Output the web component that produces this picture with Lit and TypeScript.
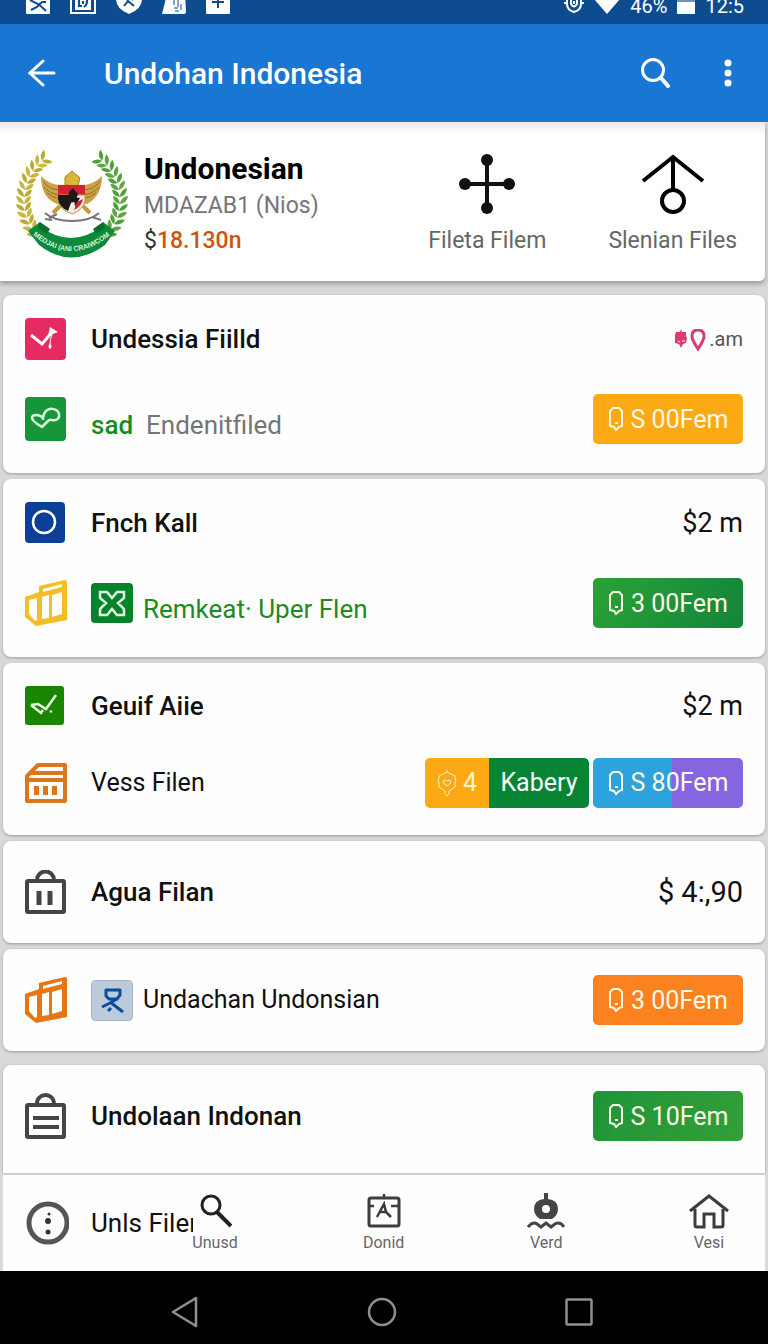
import { LitElement, html, svg, css, nothing } from 'lit';
import { customElement, property } from 'lit/decorators.js';

const icons: Record<string, { w: number; h: number; art: unknown }> = {
  gallery: {
    w: 24,
    h: 24,
    art: svg`<rect width="24" height="24" rx="1" fill="#fff"/>
      <path d="M4 10l8 4q4 3 8 7M5 20l6-3 5-5 4 0" fill="none" stroke="#0d4c8f" stroke-width="2"/>`,
  },
  frame: {
    w: 26,
    h: 24,
    art: svg`<rect x="1" y="1" width="24" height="22" fill="none" stroke="#fff" stroke-width="2"/>
      <rect x="5" y="4" width="16" height="16" fill="#fff"/>
      <path d="M9 8v8h3M13 11v3M17 8q1 6-3 9" fill="none" stroke="#0d4c8f" stroke-width="2"/>`,
  },
  shield: {
    w: 26,
    h: 25,
    art: svg`<path d="M0 2h26v8q0 10-13 15Q0 20 0 10z" fill="#fff"/>
      <path d="M8 17l4-5-2-4M12 12l6 5M13 8l4 3" fill="none" stroke="#0d4c8f" stroke-width="2"/>`,
  },
  archive: {
    w: 24,
    h: 24,
    art: svg`<path d="M5 4h18l1 18q0 2-2 2H0z" fill="#fff"/>
      <path d="M12 9v6M12 18h4M16 9v8M19 14v6M13 21h4" fill="none" stroke="#0d4c8f" stroke-width="1"/>`,
  },
  plus: {
    w: 24,
    h: 24,
    art: svg`<rect width="24" height="24" rx="1" fill="#fff"/>
      <path d="M12 6v12M6 12h12" stroke="#0d4c8f" stroke-width="2"/>`,
  },
  alarm: {
    w: 20,
    h: 24,
    art: svg`<path d="M3 6v8q0 6 7 8q7-2 7-8V6M0 13h3M17 13h3" fill="none" stroke="#fff" stroke-width="2"/>
      <path d="M7 10q3-3 6 0v4q-3 5-6 0zM10 11v3" fill="none" stroke="#fff" stroke-width="2"/>`,
  },
  wifi: { w: 26, h: 24, art: svg`<path d="M0 9Q13-2 26 9L13 24z" fill="#fff"/>` },
  battery: {
    w: 18,
    h: 24,
    art: svg`<rect width="18" height="13" fill="#6e94bd"/><rect y="12" width="18" height="12" fill="#fff"/>`,
  },
  back: {
    w: 28,
    h: 28,
    art: svg`<path d="M26 14H2M15 2L2 14l13 12" fill="none" stroke="#fff" stroke-width="3" stroke-linecap="round"/>`,
  },
  search: {
    w: 30,
    h: 30,
    art: svg`<circle cx="12" cy="12" r="10.5" fill="none" stroke="#fff" stroke-width="3"/>
      <path d="M20 20l7 8" stroke="#fff" stroke-width="4" stroke-linecap="round"/>`,
  },
  more: {
    w: 8,
    h: 28,
    art: svg`<g fill="#fff"><circle cx="4" cy="4" r="3.5"/><circle cx="4" cy="14" r="3.5"/><circle cx="4" cy="24" r="3.5"/></g>`,
  },
  nodes: {
    w: 58,
    h: 60,
    art: svg`<path d="M29 6v48M7 30h44" stroke="#111" stroke-width="4"/>
      <g fill="#111"><circle cx="29" cy="6" r="6"/><circle cx="29" cy="54" r="6"/><circle cx="7" cy="30" r="6"/><circle cx="51" cy="30" r="6"/></g>`,
  },
  anchor: {
    w: 64,
    h: 60,
    art: svg`<path d="M2 27L32 3l30 24M32 3v33" fill="none" stroke="#000" stroke-width="4"/>
      <circle cx="32" cy="47" r="11" fill="none" stroke="#000" stroke-width="4"/>`,
  },
  pinkCheck: {
    w: 42,
    h: 42,
    art: svg`<rect width="41" height="42" rx="4" fill="#e62b60"/>
      <path d="M6 17l11 9 11-13" fill="none" stroke="#fff" stroke-width="3"/>
      <path d="M25 9l8 5-5 2-5 2z" fill="#fff"/>
      <path d="M27 16q-2 6-2 10" fill="none" stroke="#fff"/>
      <path d="M25 25q-3 4 0 6 3-2 0-6z" fill="#fff"/>`,
  },
  loop: {
    w: 42,
    h: 44,
    art: svg`<rect width="41" height="44" rx="4" fill="#179539"/>
      <path d="M18 21C15 17 7 17 7 21q0 3 10 9l6-6q2-2 4-1c5 1 8-2 7-6-1-5-9-7-13-3q-3 3-3 9" fill="none" stroke="#d6fadb" stroke-width="2.500"/>`,
  },
  ring: {
    w: 42,
    h: 42,
    art: svg`<rect width="40" height="41" rx="4" fill="#0d3f98"/>
      <circle cx="19" cy="20" r="11" fill="none" stroke="#fff" stroke-width="2.500"/>`,
  },
  blocksYellow: { w: 42, h: 46, art: blocks('#f3bd25') },
  blocksOrange: { w: 42, h: 46, art: blocks('#e87512') },
  cross: {
    w: 42,
    h: 40,
    art: svg`<rect width="42" height="40" rx="4" fill="#05832b"/>
      <path d="M9 9h7l5 6 5-6h7v6l-6 5 6 6v6h-7l-5-6-5 6H9v-6l6-6-6-5z" fill="none" stroke="#dcf8df" stroke-width="2.500"/>`,
  },
  greenCheck: {
    w: 42,
    h: 40,
    art: svg`<rect width="39" height="39" rx="3" fill="#1a8500"/>
      <path d="M6 19l7-1 8 5L31 9M6 19l10 8 2-3M25 25l2 1" fill="none" stroke="#e4ffd9" stroke-width="2.500"/>`,
  },
  store: {
    w: 42,
    h: 40,
    art: svg`<path d="M2 13L13 2h27v36H2zM6 10h33M3 17h36" fill="none" stroke="#df7519" stroke-width="4" stroke-linejoin="round"/>
      <path d="M9 23h5v9H9zM18 23h5v9h-5zM27 23h5v9h-5z" fill="#df7519"/>`,
  },
  bag: {
    w: 42,
    h: 44,
    art: svg`<rect x="2" y="11" width="37" height="31" rx="1" fill="none" stroke="#454545" stroke-width="4"/>
      <path d="M12 11v-1a8.500 8.500 0 0 1 17 0v1" fill="none" stroke="#454545" stroke-width="4"/>
      <path d="M14 21v14M25 21v14" stroke="#454545" stroke-width="5"/>`,
  },
  clipboard: {
    w: 42,
    h: 46,
    art: svg`<rect x="2" y="12" width="37" height="32" rx="1" fill="none" stroke="#454545" stroke-width="4"/>
      <path d="M12 12v-2a8.500 8 0 0 1 17 0v2" fill="none" stroke="#454545" stroke-width="4"/>
      <path d="M8 25h26M8 34h26" stroke="#454545" stroke-width="4"/>`,
  },
  person: {
    w: 42,
    h: 41,
    art: svg`<rect x=".5" y=".5" width="41" height="40" rx="4" fill="#bccbdb" stroke="#a5b3c1"/>
      <path d="M15 10h14v5l-3 4h-8l-3-3zM26 19l-7 4-8 4M19 22l13 10M17 31l3-3" fill="none" stroke="#0a4d9c" stroke-width="3" stroke-linejoin="round"/>`,
  },
  options: {
    w: 44,
    h: 44,
    art: svg`<circle cx="23" cy="22" r="19" fill="none" stroke="#555" stroke-width="5"/>
      <g fill="#333"><circle cx="24" cy="13" r="1.500"/><circle cx="23" cy="20" r="3"/><circle cx="23" cy="31" r="2.500"/></g>`,
  },
  drop: {
    w: 16,
    h: 26,
    art: svg`<path d="M2 5l3-3h6l3 3v15l-3 1-3 3-2-3-4-1zM7 17h3" fill="none" stroke="currentColor" stroke-width="2"/>`,
  },
  bulb: {
    w: 20,
    h: 28,
    art: svg`<path d="M10 1v2L2 7v2l-1 3 1 2v4l6 4v3l2 2 2-2v-3l6-4v-4l1-2-1-3V7l-8-4M6 12q3-2 4 0 3-2 4 0 0 3-4 5-4-2-4-5z" fill="none" stroke="currentColor"/>`,
  },
  flower: {
    w: 32,
    h: 22,
    art: svg`<path d="M7 0l1 3 4 0 0 3 1 4-1 4-3 1-2 4-2-4-4-1 0-4 0-4 1-3h4z" fill="#dc3a70"/>
      <path d="M4 12l2 1M8 12h3" stroke="#fff"/>
      <path d="M24 20q-6-9-6-13 0-6 6-6t6 6q0 4-6 13z" fill="none" stroke="#dc3a70" stroke-width="3"/>`,
  },
  find: {
    w: 34,
    h: 36,
    art: svg`<circle cx="13" cy="12" r="9" fill="none" stroke="#222" stroke-width="3"/>
      <path d="M19 19l14 14" stroke="#222" stroke-width="4"/>`,
  },
  contact: {
    w: 34,
    h: 36,
    art: svg`<rect x="2" y="5" width="30" height="28" rx="2" fill="none" stroke="#3c3c3c" stroke-width="3"/>
      <path d="M17 1v5M2 13h5M24 13h8M10 24l7-13 2 8 5 5M13 19h7" fill="none" stroke="#3c3c3c" stroke-width="2.500"/>`,
  },
  buoy: {
    w: 38,
    h: 36,
    art: svg`<path d="M17 0h4v6q10 1 10 10 0 6-6 10H13Q7 22 7 16 7 7 17 6z" fill="#454545"/>
      <circle cx="19" cy="16" r="4" fill="#fff"/>
      <path d="M1 34q5-6 9-3l4 3 5-4 5 4 4-3q5-3 9 3" fill="none" stroke="#454545" stroke-width="3"/>`,
  },
  home: {
    w: 40,
    h: 36,
    art: svg`<path d="M1 18L20 3l19 15M6 16v16q0 2 2 2h7V21h10v13h7q2 0 2-2V16" fill="none" stroke="#3c3c3c" stroke-width="3"/>`,
  },
  navBack: {
    w: 28,
    h: 32,
    art: svg`<path d="M25 2v28L2 16z" fill="none" stroke="#8f8f8f" stroke-width="2.500" stroke-linejoin="round"/>`,
  },
  navHome: {
    w: 30,
    h: 30,
    art: svg`<circle cx="15" cy="15" r="13" fill="none" stroke="#8f8f8f" stroke-width="2.500"/>`,
  },
  navRecent: {
    w: 28,
    h: 28,
    art: svg`<rect x="1.500" y="1.500" width="25" height="25" rx="1" fill="none" stroke="#8f8f8f" stroke-width="2.500"/>`,
  },
};

function blocks(color: string) {
  return svg`<path fill=${color} fill-rule="evenodd" d="M0 17l14-5V6l26-6q2 0 2 2v38l-31 6L0 37zM4 20v14l6 7 2-1V18zM17 17v22l7-1V15zM27 15v22l10-3V12zM18 9v3l19-5V4z"/>`;
}

function icon(name: string) {
  const { w, h, art } = icons[name];
  return html`<svg width=${w} height=${h} viewBox="0 0 ${w} ${h}" aria-hidden="true">${art}</svg>`;
}

@customElement('state-emblem')
export class StateEmblem extends LitElement {
  static styles = css`
    :host {
      display: block;
    }
    svg {
      display: block;
    }
    .motto {
      font: bold 7px 'Liberation Sans', sans-serif;
      fill: #d9f5dd;
    }
  `;

  // one half of the wreath: pairs of leaves along an arc
  private leaves(side: number, colors: string[]) {
    const out = [];
    for (let i = 0; i < 13; i++) {
      const a = ((-32 + i * 8) * Math.PI) / 180;
      const x = 56 + side * Math.cos(a - 0.4) * 48;
      const y = 53 + Math.sin(a - 0.4) * 50;
      const turn = (a * 180) / Math.PI - 23;
      const lean = side > 0 ? turn : 180 - turn;
      const fill = colors[i % colors.length];
      out.push(svg`<g transform="translate(${x} ${y}) rotate(${lean})" fill=${fill}>
        <path d="M0 ${side * 3}Q1 ${-side * 4} 8 ${-side * 5}Q7 ${side * 2} 0 ${side * 3}z"/>
        <path d="M0 ${side * 3}Q-1 ${-side * 4} -7 ${-side * 5}Q-7 ${side * 2} 0 ${side * 3}z"/>
      </g>`);
    }
    return out;
  }

  render() {
    return html`
      <svg width="112" height="114" viewBox="0 0 112 114" role="img" aria-label="Emblem">
        ${this.leaves(-1, ['#b9ab35', '#c9b83f'])} ${this.leaves(1, ['#4fa03a', '#5fa63c'])}
        <path d="M25 29q0 22 16 28l30 0q15-8 15-28-9 9-20 9H46q-13 0-21-9z" fill="#c9a348" />
        <path
          d="M27 34q6 9 17 9M28 40q6 7 16 8M31 46q6 5 14 6M84 34q-6 9-17 9M83 40q-6 7-16 8M80 46q-6 5-14 6"
          fill="none"
          stroke="#93712b"
        />
        <path d="M49 38v-8l7-6 8 7-2 8z" fill="#d9b53c" stroke="#a98222" />
        <path d="M44 59l-7 7M67 59l7 7" stroke="#c59b38" stroke-width="4" />
        <path d="M42 38h27v10H42z" fill="#d52132" />
        <path d="M42 48h27v6q-2 9-13 13Q44 63 42 54z" fill="#f1ebe4" stroke="#c49b38" />
        <path d="M42 48h13v8l-3 8q-9-4-10-12zM58 50l6 1-5 9z" fill="#1c1919" />
        <path d="M53 45l4-4 5 6-3 8-7 1z" fill="#211819" />
        <path d="M61 55l6-3q-1 7-9 11z" fill="#c92835" />
        <path d="M29 66q9 8 27 8t27-8M33 71l8-4M36 73l-7-1M76 70l9 3" fill="none" stroke="#77727c" stroke-width="2" />
        <path d="M12 84l12-9 1 5q30 22 60 0l2-5 12 9-10 14q-34 25-66 0z" fill="#0d8a3c" />
        <path d="M24 75l10 7-3 5-9-6M87 75l-10 7 3 5 9-6" fill="#08712e" />
        <path id="arc" d="M17 88Q56 121 97 86" fill="none" />
        <text class="motto"><textPath href="#arc">MEDJAI (ANI CRAIWCOM</textPath></text>
      </svg>
    `;
  }
}

@customElement('price-button')
export class PriceButton extends LitElement {
  @property() tone = 'amber';
  @property() label = '';

  static styles = css`
    button {
      display: flex;
      align-items: center;
      justify-content: center;
      gap: 7px;
      width: 150px;
      height: 50px;
      padding: 0;
      border: 0;
      border-radius: 5px;
      color: #fff8e6;
      font: 25px Roboto, sans-serif;
      white-space: nowrap;
    }
    .amber {
      background: #fba914;
    }
    .green {
      background: linear-gradient(120deg, #2ba237, #12853a);
    }
    .grass {
      background: linear-gradient(120deg, #1f9436, #33a038);
    }
    .orange {
      background: #fb821f;
    }
    .split {
      background: linear-gradient(90deg, #2ca3dc 53%, #8566e0 53%);
    }
  `;

  render() {
    return html`<button class=${this.tone}>${icon('drop')}<span>${this.label}</span></button>`;
  }
}

interface Row {
  icon: string;
  text: unknown;
  badge?: string;
  end?: unknown;
}

const price = (tone: string, label: string) => html`<price-button tone=${tone} label=${label}></price-button>`;

const cards: Row[][] = [
  [
    {
      icon: 'pinkCheck',
      text: html`<span class="name title">Undessia Fiilld</span>`,
      end: html`<span class="tag">${icon('flower')}.am</span>`,
    },
    {
      icon: 'loop',
      text: html`<span class="name low"><b class="accent">sad</b><span class="muted">Endenitfiled</span></span>`,
      end: price('amber', 'S 00Fem'),
    },
  ],
  [
    {
      icon: 'ring',
      text: html`<span class="name title">Fnch Kall</span>`,
      end: html`<span class="amount">$2 m</span>`,
    },
    {
      icon: 'blocksYellow',
      badge: 'cross',
      text: html`<span class="name low leaf">Remkeat· Uper Flen</span>`,
      end: price('green', '3 00Fem'),
    },
  ],
  [
    {
      icon: 'greenCheck',
      text: html`<span class="name title">Geuif Aiie</span>`,
      end: html`<span class="amount">$2 m</span>`,
    },
    {
      icon: 'store',
      text: html`<span class="name small">Vess Filen</span>`,
      end: html`<button class="combo">
          <span class="count">${icon('bulb')}4</span>
          <span class="word">Kabery</span>
        </button>
        ${price('split', 'S 80Fem')}`,
    },
  ],
  [
    {
      icon: 'bag',
      text: html`<span class="name title">Agua Filan</span>`,
      end: html`<span class="amount large">$ 4:,90</span>`,
    },
  ],
  [
    {
      icon: 'blocksOrange',
      badge: 'person',
      text: html`<span class="name small">Undachan Undonsian</span>`,
      end: price('orange', '3 00Fem'),
    },
  ],
];

const tabs = [
  { icon: 'find', label: 'Unusd' },
  { icon: 'contact', label: 'Donid' },
  { icon: 'buoy', label: 'Verd' },
  { icon: 'home', label: 'Vesi' },
];

@customElement('app-root')
export class AppRoot extends LitElement {
  static styles = css`
    :host {
      display: flex;
      flex-direction: column;
      min-height: 100vh;
      background: #d9dad8;
      color: #111;
      font-family: Roboto, 'Open Sans', sans-serif;
      font-size: 26px;
    }
    * {
      box-sizing: border-box;
    }
    svg {
      display: block;
      flex: none;
    }
    button {
      padding: 0;
      border: 0;
      background: none;
      color: inherit;
      font: inherit;
    }
    .status {
      display: flex;
      align-items: flex-end;
      justify-content: space-between;
      height: 24px;
      padding: 0 24px 10px 26px;
      background: #0d4c8f;
      color: #fff;
      font-size: 20px;
      line-height: 16px;
    }
    .notices,
    .signals {
      display: flex;
      align-items: flex-end;
    }
    .notices {
      gap: 20px;
    }
    .signals {
      gap: 10px;
    }
    .appbar {
      display: flex;
      align-items: center;
      height: 98px;
      padding: 0 36px 0 28px;
      background: #1976d2;
      color: #fff;
    }
    .appbar h1 {
      flex: 1;
      margin: 0 0 0 48px;
      font-size: 30px;
      font-weight: 500;
    }
    .actions {
      display: flex;
      align-items: center;
      gap: 53px;
    }
    .profile {
      display: flex;
      align-items: center;
      height: 159px;
      margin: 0 3px 14px 0;
      padding: 4px 28px 0 16px;
      background: linear-gradient(#e9e8e4, #fff 12px);
      border-radius: 0 0 6px 0;
      box-shadow: 0 3px 5px #999;
    }
    .who {
      flex: 1;
      margin-left: 16px;
    }
    .who h2 {
      margin: 0;
      color: #000;
      font-size: 30px;
      font-weight: 700;
      line-height: 38px;
    }
    .who p {
      margin: 0;
      color: #757575;
      font-size: 23px;
      line-height: 35px;
    }
    .who .balance {
      color: #d0520f;
      font-weight: 500;
    }
    .balance span {
      color: #333;
      font-weight: 400;
    }
    .shortcuts {
      display: flex;
      gap: 62px;
    }
    .shortcuts button {
      display: flex;
      flex-direction: column;
      align-items: center;
      gap: 12px;
      padding-top: 2px;
      color: #666;
      font-size: 23px;
      line-height: 30px;
    }
    .list {
      display: flex;
      flex-direction: column;
      gap: 6px;
      margin: 0 3px;
    }
    .card {
      background: #fefefe;
      border-radius: 8px;
      box-shadow: 0 1px 3px #999;
    }
    .card.double {
      padding: 4px 0 14px;
    }
    .row {
      display: flex;
      align-items: center;
      gap: 24px;
      height: 102px;
      padding: 0 22px;
    }
    .double .row {
      height: 80px;
    }
    .double.compact .row {
      height: 77px;
    }
    .label {
      display: flex;
      flex: 1;
      align-items: center;
      gap: 10px;
      white-space: nowrap;
    }
    .name {
      line-height: 32px;
    }
    .title {
      font-weight: 500;
    }
    .small {
      font-size: 25px;
    }
    .low {
      display: flex;
      gap: 13px;
      padding-top: 12px;
    }
    .accent {
      color: #12901c;
      font-weight: 500;
    }
    .muted {
      color: #757575;
    }
    .leaf {
      color: #1f8a22;
    }
    .end {
      display: flex;
      gap: 4px;
    }
    .tag {
      display: flex;
      align-items: flex-end;
      gap: 3px;
      color: #555;
      font-size: 20px;
    }
    .amount {
      font-size: 27px;
    }
    .large {
      font-size: 29px;
    }
    .combo {
      display: flex;
      height: 50px;
      overflow: hidden;
      border-radius: 5px;
      color: #fff;
      font-size: 25px;
    }
    .count,
    .word {
      display: flex;
      align-items: center;
      justify-content: center;
    }
    .count {
      gap: 6px;
      width: 64px;
      background: #fda914;
      color: #fff3cf;
    }
    .word {
      width: 100px;
      background: #078535;
    }
    .last {
      flex: 1;
      margin-top: 8px;
      padding-bottom: 6px;
      border-radius: 8px 8px 0 0;
    }
    .bottom {
      display: flex;
      align-items: center;
      height: 98px;
      margin: 0 3px;
      padding: 0 34px 0 22px;
      border-top: 2px solid #ccc;
      background: #fefefe;
    }
    .clipped {
      width: 102px;
      margin-left: 22px;
      overflow: hidden;
      white-space: nowrap;
    }
    .tabs {
      display: grid;
      flex: 1;
      grid-template-columns: 50px repeat(3, 1fr);
      justify-items: end;
    }
    .tab {
      display: flex;
      flex-direction: column;
      align-items: center;
      gap: 4px;
      width: 44px;
      color: #666;
      font-size: 16px;
      line-height: 20px;
      text-decoration: none;
    }
    .tab:first-child {
      justify-self: start;
    }
    .system {
      display: flex;
      align-items: center;
      justify-content: center;
      gap: 168px;
      height: 73px;
      padding: 8px 4px 0 0;
      background: #000;
    }
  `;

  private row(r: Row) {
    return html`<div class="row">
      ${icon(r.icon)}
      <div class="label">${r.badge ? icon(r.badge) : nothing}${r.text}</div>
      <div class="end">${r.end}</div>
    </div>`;
  }

  render() {
    return html`
      <div class="status">
        <div class="notices">${['gallery', 'frame', 'shield', 'archive', 'plus'].map(icon)}</div>
        <div class="signals">
          ${icon('alarm')}${icon('wifi')}<span>46%</span>${icon('battery')}<span>12:5</span>
        </div>
      </div>
      <header class="appbar">
        <button aria-label="Back">${icon('back')}</button>
        <h1>Undohan Indonesia</h1>
        <div class="actions">
          <button aria-label="Search">${icon('search')}</button>
          <button aria-label="More">${icon('more')}</button>
        </div>
      </header>
      <section class="profile">
        <state-emblem></state-emblem>
        <div class="who">
          <h2>Undonesian</h2>
          <p>MDAZAB1 (Nios)</p>
          <p class="balance"><span>$</span>18.130n</p>
        </div>
        <div class="shortcuts">
          <button>${icon('nodes')}Fileta Filem</button>
          <button>${icon('anchor')}Slenian Files</button>
        </div>
      </section>
      <main class="list">
        ${cards.map(
          (rows, i) => html`<section class="card ${rows.length > 1 ? 'double' : ''} ${i === 2 ? 'compact' : ''}">
            ${rows.map((r) => this.row(r))}
          </section>`,
        )}
        <section class="card last">
          ${this.row({
            icon: 'clipboard',
            text: html`<span class="name title">Undolaan Indonan</span>`,
            end: price('grass', 'S 10Fem'),
          })}
        </section>
      </main>
      <div class="bottom">
        ${icon('options')}
        <span class="clipped">Unls Filen</span>
        <nav class="tabs">
          ${tabs.map((t) => html`<a class="tab" href="#">${icon(t.icon)}<span>${t.label}</span></a>`)}
        </nav>
      </div>
      <footer class="system">
        <button aria-label="System back">${icon('navBack')}</button>
        <button aria-label="System home">${icon('navHome')}</button>
        <button aria-label="Recent apps">${icon('navRecent')}</button>
      </footer>
    `;
  }
}
